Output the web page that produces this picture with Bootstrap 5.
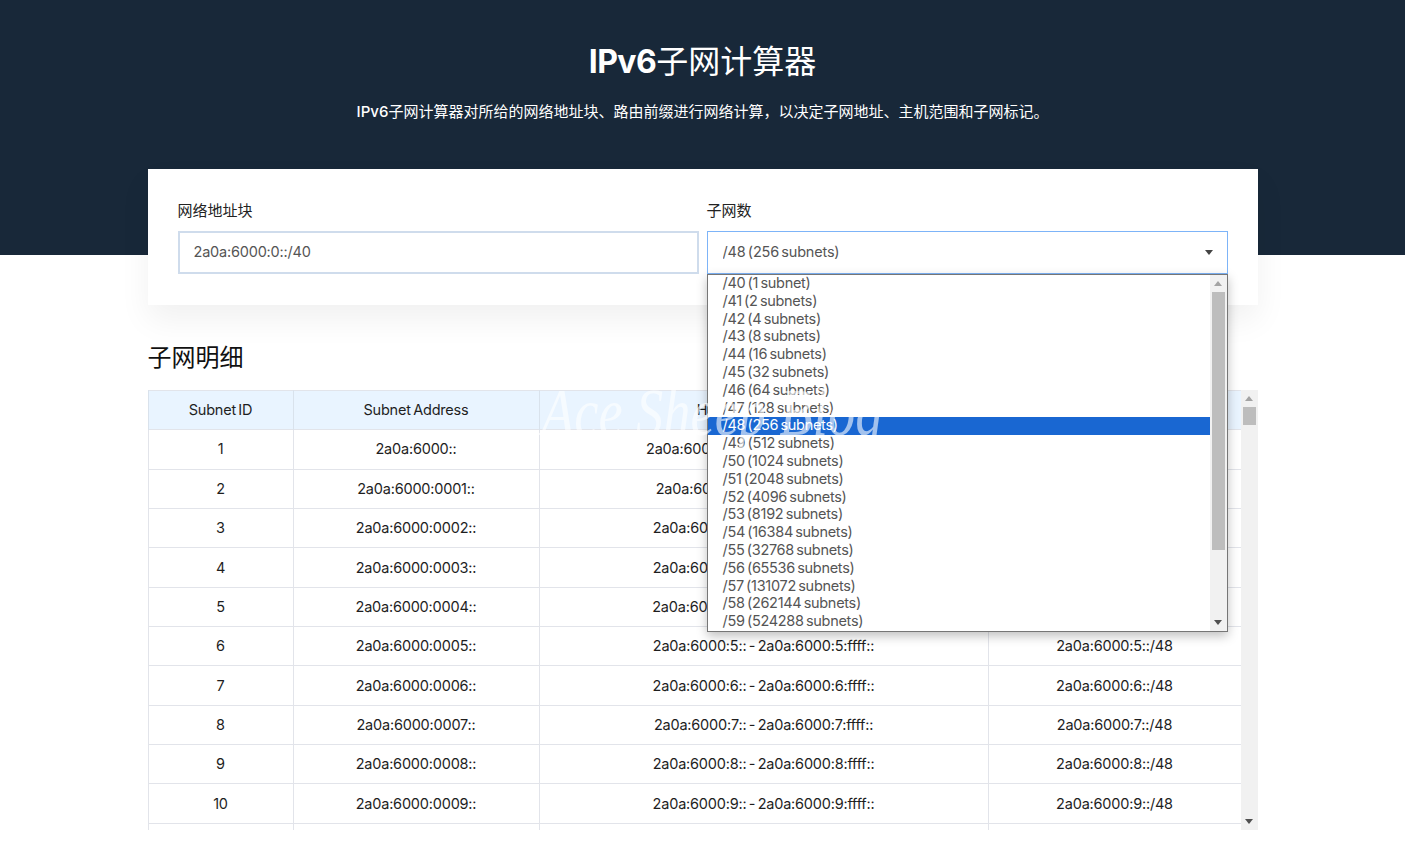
<!DOCTYPE html>
<html lang="zh-CN">
<head>
  <meta charset="UTF-8">
  <meta name="viewport" content="width=device-width, initial-scale=1">
  <title>IPv6子网计算器</title>
  <link href="https://cdn.jsdelivr.net/npm/bootstrap@5.3.3/dist/css/bootstrap.min.css" rel="stylesheet">
  <style>
    html, body {
      height: 857px;
      overflow: hidden;
    }
    body {
      font-family: Inter, "Noto Sans CJK SC", sans-serif;
      font-size: 14.5px;
      color: #222;
      background-color: #fff;
    }
    .page-head {
      background-color: #182839;
      height: 255px;
      padding-top: 41px;
    }
    .page-head h1 {
      font-size: 32px;
      font-weight: 400;
      line-height: 42px;
      margin-bottom: 19px;
    }
    .page-head h1 b {
      font-weight: 700;
      letter-spacing: -.5px;
    }
    .page-head p {
      font-size: 15px;
      font-weight: 400;
      line-height: 20px;
    }
    .page-head p b {
      font-weight: 500;
    }
    .page-wrap {
      width: 1110px;
      margin: -86px auto 0;
    }
    .calc-card {
      height: 136px;
      padding: 30px;
      border: 0;
      border-radius: 0;
      box-shadow: 0 15px 30px rgba(0, 0, 0, .06);
    }
    .calc-card .form-label {
      font-size: 15px;
      line-height: 24px;
      margin-bottom: 8px;
    }
    .calc-card .form-control, .calc-card .form-select {
      height: 43px;
      padding: 0 15px 2px;
      border-radius: 0;
      font-size: 14.5px;
      letter-spacing: -.2px;
      word-spacing: -1.5px;
      color: #555;
      box-shadow: none;
    }
    .calc-card .form-control {
      padding-left: 14px;
      border: 2px solid #cfdcec;
    }
    .calc-card .form-select {
      border: 1px solid #7db4f8;
      background-image: none;
    }
    .calc-fields {
      gap: 8px;
    }
    .calc-fields > div {
      width: 521px;
    }
    .caret {
      top: 51px;
      right: 15px;
      border-left: 4.5px solid transparent;
      border-right: 4.5px solid transparent;
      border-top: 5px solid #444;
    }
    .subnet-menu {
      top: 75px;
      left: 0;
      width: 521px;
      height: 358px;
      background: #fff;
      border: 1px solid #767676;
      box-shadow: 0 4px 10px rgba(0, 0, 0, .25);
      z-index: 10;
      color: #555;
      font-size: 14.5px;
      letter-spacing: -.3px;
      word-spacing: -1.5px;
    }
    .subnet-list div {
      height: 17.8px;
      line-height: 16px;
      padding-left: 15px;
      white-space: nowrap;
    }
    .subnet-list .active-item {
      background-color: #1967d2;
      color: #fff;
    }
    .section-title {
      font-size: 24px;
      font-weight: 400;
      line-height: 32px;
      margin: 37px 0 16px;
      color: #111;
    }
    .table-pane {
      height: 440px;
      overflow: hidden;
    }
    .subnet-table {
      table-layout: fixed;
      width: 1093px;
      margin: 0;
      border-color: #e2e4ea;
      --bs-table-color: #1e1e1e;
    }
    .subnet-table th, .subnet-table td {
      height: 39.35px;
      padding: 0 4px;
      font-size: 14.5px;
      font-weight: 400;
      letter-spacing: -.2px;
      word-spacing: -1.5px;
      text-align: center;
      vertical-align: middle;
    }
    .subnet-table th {
      background-color: #e9f4ff;
      border-color: #d9e2ec;
      height: 39.2px;
    }
    .subnet-table th:nth-child(1) { width: 145px; }
    .subnet-table th:nth-child(2) { width: 246px; }
    .subnet-table th:nth-child(3) { width: 449px; }
    .subnet-table th:nth-child(4) { width: 253px; }
    /* scrollbars are drawn by hand, the headless browser hides real ones */
    .bar {
      flex: 0 0 17px;
      width: 17px;
      background-color: #f1f1f1;
    }
    .bar-btn {
      height: 17px;
    }
    .bar-up::after, .bar-down::after {
      content: "";
      border-left: 4.5px solid transparent;
      border-right: 4.5px solid transparent;
    }
    .bar-up::after {
      border-bottom: 5px solid #a3a3a3;
    }
    .bar-down::after {
      border-top: 5px solid #505050;
    }
    .bar-thumb {
      width: 13px;
      background-color: #bdbdbd;
    }
    .menu-thumb {
      height: 258px;
    }
    .table-thumb {
      height: 18px;
    }
    .watermark {
      top: 372px;
      left: 541px;
      font-family: "Liberation Serif", serif;
      font-style: italic;
      font-size: 68px;
      line-height: 80px;
      color: rgba(255, 255, 255, .6);
      white-space: nowrap;
      pointer-events: none;
      z-index: 20;
      transform: scaleX(.8);
      transform-origin: left center;
    }
  </style>
</head>
<body class="position-relative">

<header class="page-head text-center text-white">
  <h1><b>IPv6</b>子网计算器</h1>
  <p class="mb-0"><b>IPv6</b>子网计算器对所给的网络地址块、路由前缀进行网络计算，以决定子网地址、主机范围和子网标记。</p>
</header>

<div class="page-wrap">
  <div class="card calc-card">
    <div class="d-flex calc-fields">
      <div>
        <label class="form-label d-block" for="network">网络地址块</label>
        <input class="form-control" id="network" type="text" value="2a0a:6000:0::/40">
      </div>
      <div class="position-relative">
        <label class="form-label d-block" for="subnets">子网数</label>
        <select class="form-select" id="subnets"><option>/48 (256 subnets)</option></select>
        <span class="caret position-absolute"></span>
        <div class="subnet-menu position-absolute d-flex">
          <div class="subnet-list flex-grow-1" id="subnet-menu"></div>
          <div class="bar d-flex flex-column align-items-center">
            <div class="bar-btn bar-up d-flex align-items-center"></div>
            <div class="bar-thumb menu-thumb"></div>
            <div class="flex-grow-1"></div>
            <div class="bar-btn bar-down d-flex align-items-center"></div>
          </div>
        </div>
      </div>
    </div>
  </div>

  <h2 class="section-title">子网明细</h2>

  <div class="d-flex">
    <div class="table-pane">
      <table class="table table-bordered subnet-table">
        <thead>
          <tr>
            <th>Subnet ID</th>
            <th>Subnet Address</th>
            <th>Host Address Range</th>
            <th>Subnet Notation</th>
          </tr>
        </thead>
        <tbody id="subnet-rows"></tbody>
      </table>
    </div>
    <div class="bar d-flex flex-column align-items-center">
      <div class="bar-btn bar-up d-flex align-items-center"></div>
      <div class="bar-thumb table-thumb"></div>
      <div class="flex-grow-1"></div>
      <div class="bar-btn bar-down d-flex align-items-center"></div>
    </div>
  </div>
</div>

<div class="watermark position-absolute">Ace Sheep Blog</div>

<script>
  // Dropdown options, the 20 that are in view
  const menu = document.getElementById('subnet-menu');
  for (let p = 40; p < 60; p++) {
    const item = document.createElement('div');
    const n = Math.pow(2, p - 40);
    item.textContent = `/${p} (${n} subnet${n > 1 ? 's' : ''})`;
    if (p === 48) item.className = 'active-item';
    menu.appendChild(item);
  }

  // /48 subnets of 2a0a:6000::/40
  const rows = document.getElementById('subnet-rows');
  let html = '';
  for (let i = 0; i < 10; i++) {
    const hex = i.toString(16);
    const address = i === 0 ? '2a0a:6000::' : `2a0a:6000:${hex.padStart(4, '0')}::`;
    const range = i === 0 ? '2a0a:6000:0:0:: - 2a0a:6000:0:ffff::' : `2a0a:6000:${hex}:: - 2a0a:6000:${hex}:ffff::`;
    const notation = i === 0 ? '2a0a:6000::/48' : `2a0a:6000:${hex}::/48`;
    html += `<tr><td>${i + 1}</td><td>${address}</td><td>${range}</td><td>${notation}</td></tr>`;
  }
  // the next row only just shows at the bottom edge
  html += '<tr><td></td><td></td><td></td><td></td></tr>';
  rows.innerHTML = html;
</script>

<script src="https://cdn.jsdelivr.net/npm/bootstrap@5.3.3/dist/js/bootstrap.bundle.min.js"></script>
</body>
</html>
